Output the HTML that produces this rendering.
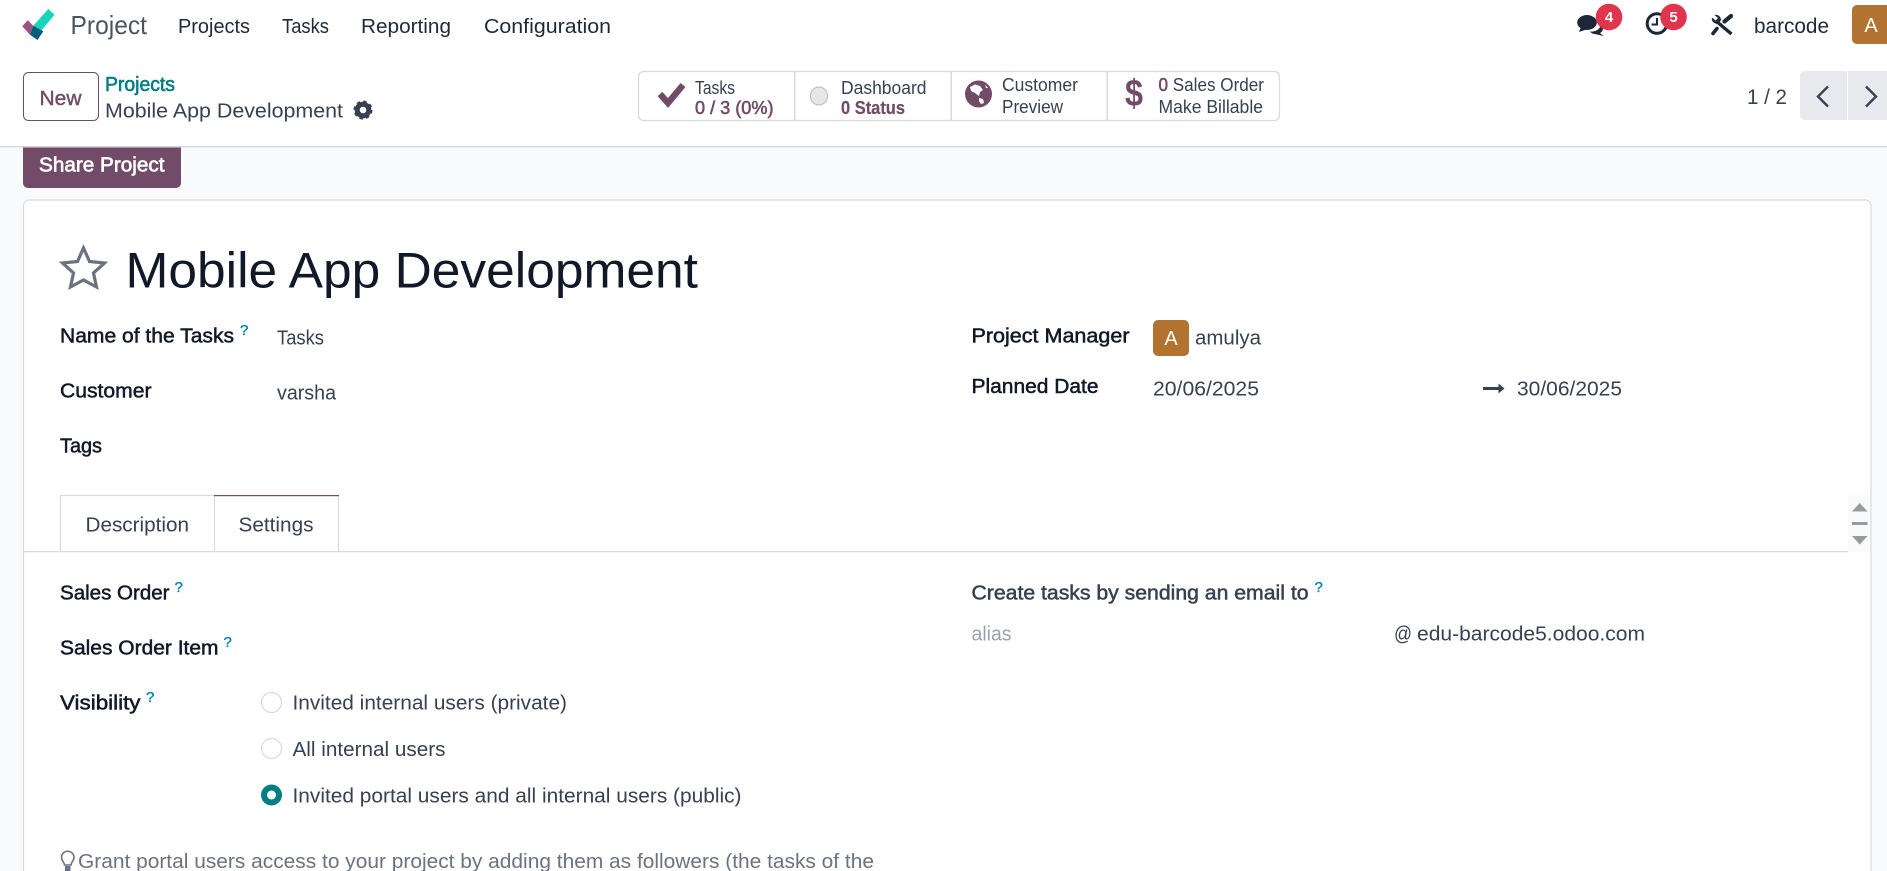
<!DOCTYPE html>
<html lang="en"><head><meta charset="utf-8"><title>Mobile App Development</title>
<style>
html,body{margin:0;padding:0;background:#fff;width:1887px;height:871px;overflow:hidden}
svg{display:block}
text{font-family:"Liberation Sans",sans-serif;font-size:20px;white-space:pre}
.n{fill:#1f2937}
.l{fill:#111827;stroke:#111827;stroke-width:.5}
.v{fill:#374151}
.s{font-size:18px;fill:#374151}
.sb{font-size:18px;fill:#714b67;stroke:#714b67;stroke-width:.55}
.q{font-size:15px;fill:#0180a5;stroke:#0180a5;stroke-width:.3}
.b{font-size:14px;fill:#fff;font-weight:700;text-anchor:middle}
</style></head><body>
<svg width="1887" height="871" viewBox="0 0 1887 871" xmlns="http://www.w3.org/2000/svg">
<!-- backgrounds -->
<rect width="1887" height="871" fill="#f9fafb"/>
<rect width="1887" height="146" fill="#fff"/>
<rect y="146" width="1887" height="1.5" fill="#d8dadd"/>

<!-- brand logo -->
<polygon points="48.3,9 54.5,14.7 41,31 33.3,25.7" fill="#1ad3bb"/>
<polygon points="22.3,26.3 27.7,20.3 33.3,25.7 30,34.7" fill="#985184"/>
<polygon points="33.3,25.7 43.3,31.3 37.5,40 30,34.7" fill="#005e7a"/>
<text x="70.5" y="34" style="font-size:26px" fill="#4b5563" textLength="76.5" lengthAdjust="spacingAndGlyphs">Project</text>
<text x="178" y="33" class="n" textLength="72" lengthAdjust="spacingAndGlyphs">Projects</text>
<text x="282" y="33" class="n" textLength="47" lengthAdjust="spacingAndGlyphs">Tasks</text>
<text x="361" y="33" class="n" textLength="90" lengthAdjust="spacingAndGlyphs">Reporting</text>
<text x="484" y="33" class="n" textLength="127" lengthAdjust="spacingAndGlyphs">Configuration</text>

<!-- systray -->
<ellipse cx="1587" cy="22.5" rx="9.8" ry="7.5" fill="#1b2838"/>
<path d="M1581 27 L1579 32 L1588 29Z" fill="#1b2838"/>
<path d="M1590 31.5 C1595 32 1599 30 1600.5 26 L1603 28 C1603 30 1602 32 1600 33 L1603.5 36 L1595 34 C1593 34 1591 33 1590 31.5Z" fill="#1b2838"/>
<circle cx="1657" cy="23.5" r="9.8" fill="none" stroke="#1b2838" stroke-width="3"/>
<path d="M1657 18 V24.5 H1651.5" fill="none" stroke="#1b2838" stroke-width="2"/>
<circle cx="1609" cy="17" r="13.3" fill="#e0364d"/>
<text x="1609" y="22" class="b" style="font-size:15px">4</text>
<circle cx="1673.5" cy="17" r="13.3" fill="#e0364d"/>
<text x="1673.5" y="22" class="b" style="font-size:15px">5</text>
<!-- wrench -->
<path d="M1716 21 L1731.5 34" fill="none" stroke="#1b2838" stroke-width="3.4"/>
<path d="M1712 17.5 L1715.5 20.5 L1718 18 L1714.5 15 C1717 14 1721 16 1721 20 L1718.5 24 C1714 24 1711 21 1712 17.5Z" fill="#1b2838"/>
<!-- screwdriver -->
<path d="M1731 16 L1724.5 21.5" fill="none" stroke="#1b2838" stroke-width="4.2" stroke-linecap="round"/>
<path d="M1717 28.5 L1713 33.5" fill="none" stroke="#1b2838" stroke-width="3.6" stroke-linecap="round"/>
<text x="1754" y="33" fill="#1f2937" style="font-size:21px" textLength="75" lengthAdjust="spacingAndGlyphs">barcode</text>
<rect x="1852" y="5" width="44" height="39" rx="5" fill="#b37330"/>
<text x="1871" y="32" style="font-size:20px" fill="#fff" text-anchor="middle">A</text>

<!-- control panel left -->
<rect x="23.5" y="72.5" width="75" height="48" rx="5" fill="#fff" stroke="#714b67"/>
<text x="39.5" y="105" fill="#714b67" textLength="42" lengthAdjust="spacingAndGlyphs" style="stroke:#714b67;stroke-width:.4">New</text>
<text x="105" y="91" fill="#017e84" stroke="#017e84" stroke-width=".6" textLength="70" lengthAdjust="spacingAndGlyphs">Projects</text>
<text x="105" y="117.5" fill="#374151" textLength="238" lengthAdjust="spacingAndGlyphs">Mobile App Development</text>
<g transform="translate(363 110)">
<circle r="5.8" fill="none" stroke="#374151" stroke-width="5"/>
<circle r="8" fill="none" stroke="#374151" stroke-width="3" stroke-dasharray="3.2 3.08"/>
</g>

<!-- stat buttons -->
<rect x="638.5" y="71.5" width="641" height="49" rx="5" fill="#fff" stroke="#d8dadd" stroke-width="1.3"/>
<rect x="794" y="72" width="1.5" height="48" fill="#d8dadd"/>
<rect x="950.5" y="72" width="1.5" height="48" fill="#d8dadd"/>
<rect x="1106.5" y="72" width="1.5" height="48" fill="#d8dadd"/>
<path d="M660 94 L668 103 L683 85" fill="none" stroke="#714b67" stroke-width="6.4"/>
<text x="695" y="94" class="s" textLength="40" lengthAdjust="spacingAndGlyphs">Tasks</text>
<text x="695" y="114" class="sb" textLength="78.5" lengthAdjust="spacingAndGlyphs">0 / 3 (0%)</text>
<ellipse cx="819" cy="96" rx="8.5" ry="9" fill="#e5e7eb" stroke="#c0c4cb" stroke-width="1.3"/>
<text x="841" y="94" class="s" textLength="85.5" lengthAdjust="spacingAndGlyphs">Dashboard</text>
<text x="841" y="114" class="sb" font-weight="700" textLength="64" lengthAdjust="spacingAndGlyphs" style="stroke-width:.2">0 Status</text>
<circle cx="978.5" cy="94" r="13.5" fill="#714b67"/>
<path d="M970 87 L975 84.5 L980 86 L983 90 L980 92 L979 96 L975 93 L971 91Z M979 98 L983 99 L984 103 L981 104 L979 101Z M985 84.5 L988 88 L986 88Z" fill="#fff"/>
<text x="1002" y="91" class="s" textLength="76" lengthAdjust="spacingAndGlyphs">Customer</text>
<text x="1002" y="113" class="s" textLength="61" lengthAdjust="spacingAndGlyphs">Preview</text>
<text x="1125" y="106" fill="#714b67" font-weight="700" style="font-size:38px" textLength="18" lengthAdjust="spacingAndGlyphs">$</text>
<text x="1158.5" y="91" class="s" textLength="105.5" lengthAdjust="spacingAndGlyphs"><tspan class="sb">0</tspan> Sales Order</text>
<text x="1158.5" y="113" class="s" textLength="104.5" lengthAdjust="spacingAndGlyphs">Make Billable</text>

<!-- pager -->
<text x="1747" y="104" fill="#374151" style="font-size:21px" textLength="40" lengthAdjust="spacingAndGlyphs">1 / 2</text>
<path d="M1800 76 a5 5 0 0 1 5 -5 H1847 V120 H1805 a5 5 0 0 1 -5 -5Z" fill="#e7e9ed"/>
<rect x="1848" y="71" width="39" height="49" fill="#e7e9ed"/>
<path d="M1828 86.5 L1818 96.5 L1828 106.5" fill="none" stroke="#374151" stroke-width="2.4"/>
<path d="M1866 86.5 L1876 96.5 L1866 106.5" fill="none" stroke="#374151" stroke-width="2.4"/>

<!-- share button -->
<path d="M23 147.5 H181 V183 a5 5 0 0 1 -5 5 H28 a5 5 0 0 1 -5 -5Z" fill="#714b67"/>
<text x="39" y="171.5" fill="#fff" stroke="#fff" stroke-width=".65" textLength="125.5" lengthAdjust="spacingAndGlyphs">Share Project</text>

<!-- card -->
<path d="M23.5 877 V206 a6 6 0 0 1 6 -6 H1865 a6 6 0 0 1 6 6 V877Z" fill="#fff" stroke="#d8dadd" stroke-width="1.2"/>
<polygon points="83.5,248 89.5,261.5 104.5,263 93.5,273 96.5,287 83.5,280 70.5,287 73.5,273 62.5,263 77.5,261.5" fill="none" stroke="#6b7280" stroke-width="3.2" stroke-linejoin="miter"/>
<text x="125.5" y="287.5" fill="#111827" style="font-size:50px" textLength="572.5" lengthAdjust="spacingAndGlyphs">Mobile App Development</text>

<text x="60" y="342.5" class="l" textLength="174" lengthAdjust="spacingAndGlyphs">Name of the Tasks</text>
<text x="240" y="335" class="q">?</text>
<text x="277" y="344.5" class="v" textLength="47" lengthAdjust="spacingAndGlyphs">Tasks</text>
<text x="60" y="397.5" class="l" textLength="91.5" lengthAdjust="spacingAndGlyphs">Customer</text>
<text x="277" y="399.5" class="v" textLength="59" lengthAdjust="spacingAndGlyphs">varsha</text>
<text x="60" y="452.5" class="l" textLength="42" lengthAdjust="spacingAndGlyphs">Tags</text>

<text x="971.5" y="342.5" class="l" textLength="158" lengthAdjust="spacingAndGlyphs">Project Manager</text>
<rect x="1153" y="320" width="36" height="36" rx="5" fill="#b37330"/>
<text x="1171" y="345" fill="#fff" text-anchor="middle" style="font-size:20px">A</text>
<text x="1195" y="344.5" class="v" textLength="66" lengthAdjust="spacingAndGlyphs">amulya</text>
<text x="971.5" y="393" class="l" textLength="127" lengthAdjust="spacingAndGlyphs">Planned Date</text>
<text x="1153" y="395.5" class="v" textLength="106" lengthAdjust="spacingAndGlyphs">20/06/2025</text>
<path d="M1483 388.5 H1500" stroke="#374151" stroke-width="3"/>
<path d="M1498.5 383.5 L1504.5 388.5 L1498.5 393.5Z" fill="#374151"/>
<text x="1517" y="395.5" class="v" textLength="105" lengthAdjust="spacingAndGlyphs">30/06/2025</text>

<!-- tabs -->
<rect x="24" y="551" width="1824" height="1.3" fill="#d8dadd"/>
<path d="M60.5 551 V495.5 H214.5 V551 M338.5 495.5 V551" fill="none" stroke="#d8dadd" stroke-width="1.2"/>
<rect x="214" y="495" width="125" height="1.2" fill="#714b67"/>
<text x="85.5" y="531.5" class="v" textLength="103.5" lengthAdjust="spacingAndGlyphs">Description</text>
<text x="238.5" y="531.5" class="v" textLength="75" lengthAdjust="spacingAndGlyphs">Settings</text>

<!-- scroll widget -->
<rect x="1848" y="495" width="22" height="57" fill="#f9fafb"/>
<polygon points="1859.7,503 1867.5,511.5 1852,511.5" fill="#9a9a9a"/>
<rect x="1852" y="522" width="15.5" height="3" fill="#9a9a9a"/>
<polygon points="1852,536 1867.5,536 1859.7,544.5" fill="#9a9a9a"/>

<!-- settings -->
<text x="60" y="599.5" class="l" textLength="109.5" lengthAdjust="spacingAndGlyphs">Sales Order</text>
<text x="174.5" y="592" class="q">?</text>
<text x="60" y="654.5" class="l" textLength="158.5" lengthAdjust="spacingAndGlyphs">Sales Order Item</text>
<text x="223.5" y="647" class="q">?</text>
<text x="60" y="709.5" class="l" textLength="80.5" lengthAdjust="spacingAndGlyphs">Visibility</text>
<text x="146" y="702" class="q">?</text>

<circle cx="271.5" cy="702.5" r="10" fill="#fff" stroke="#d8dadd" stroke-width="1.2"/>
<circle cx="271.5" cy="748.5" r="10" fill="#fff" stroke="#d8dadd" stroke-width="1.2"/>
<circle cx="271.5" cy="795" r="7.5" fill="#fff" stroke="#017e84" stroke-width="6"/>
<text x="292.5" y="709.5" class="v" textLength="274.5" lengthAdjust="spacingAndGlyphs">Invited internal users (private)</text>
<text x="292.5" y="756" class="v" textLength="153" lengthAdjust="spacingAndGlyphs">All internal users</text>
<text x="292.5" y="802.5" class="v" textLength="449" lengthAdjust="spacingAndGlyphs">Invited portal users and all internal users (public)</text>

<text x="971.5" y="599.5" fill="#374151" stroke="#374151" stroke-width=".5" textLength="337" lengthAdjust="spacingAndGlyphs">Create tasks by sending an email to</text>
<text x="1314.5" y="592" class="q">?</text>
<text x="971.5" y="640.5" fill="#9ca3af" textLength="40" lengthAdjust="spacingAndGlyphs">alias</text>
<text x="1394" y="640.5" class="v" textLength="18" lengthAdjust="spacingAndGlyphs">@</text>
<text x="1417" y="640.5" class="v" textLength="228" lengthAdjust="spacingAndGlyphs">edu-barcode5.odoo.com</text>

<!-- hint -->
<path d="M64.5 865 C64.5 862 61.5 861 61.5 857.5 A6 6 0 0 1 74 857.5 C74 861 71 862 71 865Z" fill="none" stroke="#6b7280" stroke-width="1.6"/>
<rect x="65" y="866" width="5.5" height="5" fill="#6b7280"/>
<text x="78" y="868" fill="#6b7280" textLength="796" lengthAdjust="spacingAndGlyphs">Grant portal users access to your project by adding them as followers (the tasks of the</text>
</svg>
</body></html>
